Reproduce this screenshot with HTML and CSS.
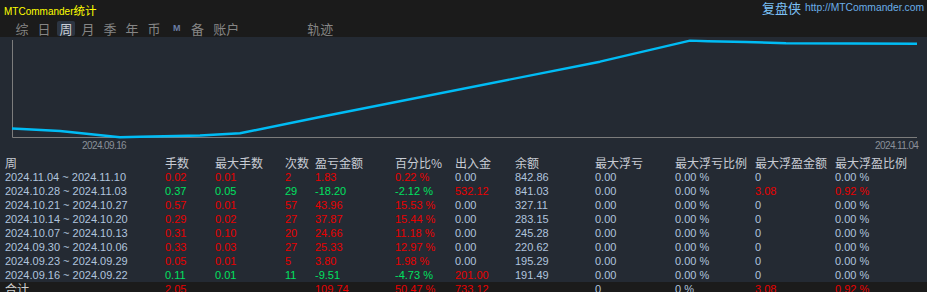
FILE: index.html
```html
<!DOCTYPE html>
<html>
	<head>
		<meta charset="UTF-8">
		<title>MTCommander统计</title>
		<link rel="stylesheet" href="styles.css">
	</head>
	<body>
		<div class="top">
			<div class="brand-row">
				<span class="brand">MTCommander<span class="brand-cn">统计</span></span>
				<span class="site"><span class="site-name">复盘侠</span><span class="site-url">http://MTCommander.com</span></span>
			</div>
			<div class="tabs">
				<span class="tab">综</span>
				<span class="tab">日</span>
				<span class="tab tab-on">周</span>
				<span class="tab">月</span>
				<span class="tab">季</span>
				<span class="tab">年</span>
				<span class="tab">币</span>
				<span class="tab tab-m">M</span>
				<span class="tab">备</span>
				<span class="tab">账户</span>
				<span class="tab tab-far">轨迹</span>
			</div>
		</div>
		<div class="chart">
			<svg width="927" height="113" viewBox="0 0 927 113">
				<path d="M12.5 3V100.5H917" class="axis"/>
				<polyline class="curve" points="12,91.5 22,92 60,94 120,100.3 140,99.7 200,98.5 240,96.3 320,80 600,24.7 690,3.6 708,4.2 746,5 786,6.2 917,6.8"/>
				<text x="82" y="111.5" class="axis-lbl">2024.09.16</text>
				<text x="875" y="111.5" class="axis-lbl">2024.11.04</text>
			</svg>
		</div>
		<div class="grid">
			<div class="row row-head">
				<span>周</span><span>手数</span><span>最大手数</span><span>次数</span><span>盈亏金额</span><span>百分比%</span><span>出入金</span><span>余额</span><span>最大浮亏</span><span>最大浮亏比例</span><span>最大浮盈金额</span><span>最大浮盈比例</span>
			</div>
			<div class="row">
				<span>2024.11.04 ~ 2024.11.10</span><span class="up">0.02</span><span class="up">0.01</span><span class="up">2</span><span class="up">1.83</span><span class="up">0.22 %</span><span>0.00</span><span>842.86</span><span>0.00</span><span>0.00 %</span><span>0</span><span>0.00 %</span>
			</div>
			<div class="row">
				<span>2024.10.28 ~ 2024.11.03</span><span class="dn">0.37</span><span class="dn">0.05</span><span class="dn">29</span><span class="dn">-18.20</span><span class="dn">-2.12 %</span><span class="up">532.12</span><span>841.03</span><span>0.00</span><span>0.00 %</span><span class="up">3.08</span><span class="up">0.92 %</span>
			</div>
			<div class="row">
				<span>2024.10.21 ~ 2024.10.27</span><span class="up">0.57</span><span class="up">0.01</span><span class="up">57</span><span class="up">43.96</span><span class="up">15.53 %</span><span>0.00</span><span>327.11</span><span>0.00</span><span>0.00 %</span><span>0</span><span>0.00 %</span>
			</div>
			<div class="row">
				<span>2024.10.14 ~ 2024.10.20</span><span class="up">0.29</span><span class="up">0.02</span><span class="up">27</span><span class="up">37.87</span><span class="up">15.44 %</span><span>0.00</span><span>283.15</span><span>0.00</span><span>0.00 %</span><span>0</span><span>0.00 %</span>
			</div>
			<div class="row">
				<span>2024.10.07 ~ 2024.10.13</span><span class="up">0.31</span><span class="up">0.10</span><span class="up">20</span><span class="up">24.66</span><span class="up">11.18 %</span><span>0.00</span><span>245.28</span><span>0.00</span><span>0.00 %</span><span>0</span><span>0.00 %</span>
			</div>
			<div class="row">
				<span>2024.09.30 ~ 2024.10.06</span><span class="up">0.33</span><span class="up">0.03</span><span class="up">27</span><span class="up">25.33</span><span class="up">12.97 %</span><span>0.00</span><span>220.62</span><span>0.00</span><span>0.00 %</span><span>0</span><span>0.00 %</span>
			</div>
			<div class="row">
				<span>2024.09.23 ~ 2024.09.29</span><span class="up">0.05</span><span class="up">0.01</span><span class="up">5</span><span class="up">3.80</span><span class="up">1.98 %</span><span>0.00</span><span>195.29</span><span>0.00</span><span>0.00 %</span><span>0</span><span>0.00 %</span>
			</div>
			<div class="row">
				<span>2024.09.16 ~ 2024.09.22</span><span class="dn">0.11</span><span class="dn">0.01</span><span class="dn">11</span><span class="dn">-9.51</span><span class="dn">-4.73 %</span><span class="up">201.00</span><span>191.49</span><span>0.00</span><span>0.00 %</span><span>0</span><span>0.00 %</span>
			</div>
			<div class="row row-sum">
				<span class="sum-lbl">合计</span><span class="up">2.05</span><span></span><span></span><span class="up">109.74</span><span class="up">50.47 %</span><span class="up">733.12</span><span></span><span>0</span><span>0 %</span><span class="up">3.08</span><span class="up">0.92 %</span>
			</div>
		</div>
	</body>
</html>
```

FILE: styles.css
```css
body {
	margin: 0;
	width: 927px;
	height: 292px;
	overflow: hidden;
	background-color: #242a33;
	font-family: "Liberation Sans", "Noto Sans CJK SC", sans-serif;
}
.top {
	height: 37px;
	background-color: #1b1b1b;
}
.brand-row {
	display: flex;
	justify-content: space-between;
	align-items: center;
	height: 18px;
	padding: 0 3px 0 4px;
}
.brand {
	color: #ffff00;
	font-size: 10px;
	margin-top: 1px;
}
.brand-cn {
	font-size: 11.5px;
}
.site {
	display: flex;
	align-items: center;
	color: #7cc0f5;
	margin-top: -3px;
}
.site-name {
	font: 13px/14px "Noto Sans CJK SC", sans-serif;
	margin-right: 4px;
}
.site-url {
	font-size: 10.3px;
	color: #6aaee8;
}
.tabs {
	display: flex;
	gap: 4px;
	height: 15px;
	margin-top: 3px;
	padding-left: 13px;
}
.tab {
	padding: 0 2.5px;
	font: 13px/15px "Noto Sans CJK SC", sans-serif;
	color: #858585;
	border-radius: 2px;
}
.tab-on {
	background-color: #2c3542;
	color: #c9ced6;
}
.tab-m {
	font: bold 9px/15px "Liberation Sans", sans-serif;
	color: #6b7ea3;
	padding: 0 4px 0 6px;
}
.tab-far {
	margin-left: 59px;
}
.chart {
	height: 113px;
}
.chart svg {
	display: block;
}
.axis {
	fill: none;
	stroke: #7c7c7c;
	stroke-width: 1;
}
.curve {
	fill: none;
	stroke: #00bcf5;
	stroke-width: 2.4;
	stroke-linejoin: round;
}
.axis-lbl {
	fill: #8a9099;
	font: 10px "Liberation Sans", sans-serif;
	letter-spacing: -0.6px;
}
.grid {
	padding-top: 6px;
}
.row {
	display: grid;
	grid-template-columns: 160px 50px 70px 30px 80px 60px 60px 80px 80px 80px 80px 1fr;
	padding-left: 5px;
	height: 14px;
	font-size: 11px;
	line-height: 14px;
	color: #b0c4de;
	white-space: nowrap;
}
.row-head {
	font: 12px/14px "Noto Sans CJK SC", sans-serif;
	color: #c8ccd4;
}
.row-sum {
	background-color: #1b1b1b;
	height: 16px;
}
.sum-lbl {
	font: 12px/14px "Noto Sans CJK SC", sans-serif;
	color: #d0d0d0;
}
.up { color: #e80000; }
.dn { color: #00e060; }
```
